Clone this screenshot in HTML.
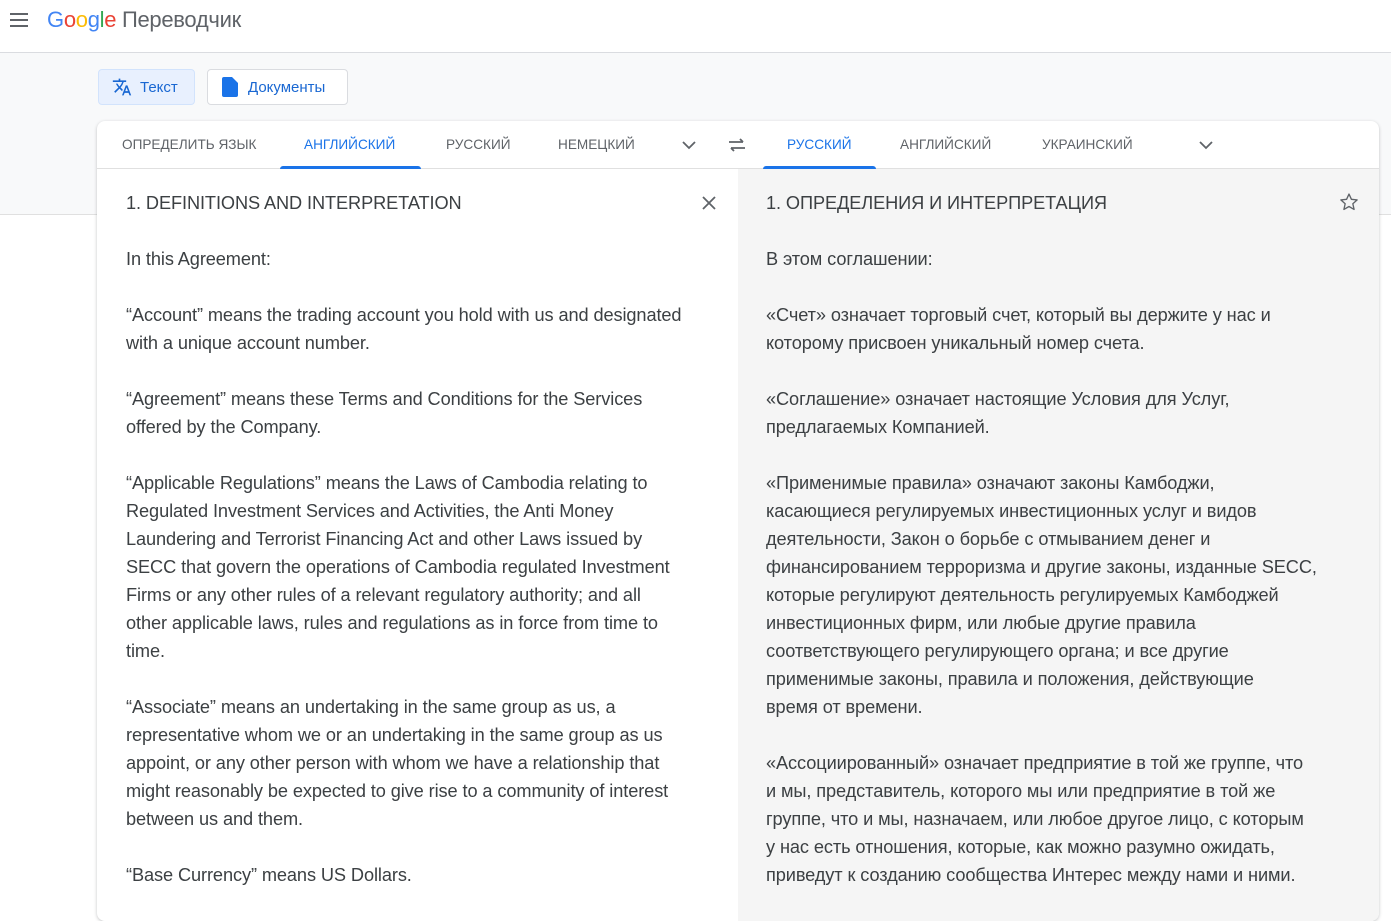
<!DOCTYPE html>
<html><head><meta charset="utf-8"><style>
*{margin:0;padding:0;box-sizing:border-box}
body{width:1391px;height:909px;overflow:hidden;background:#fff;font-family:"Liberation Sans",sans-serif;color:#3c4043;position:relative}
.hdr{height:53px;border-bottom:1px solid #dadce0;position:relative;background:#fff}
.band{position:absolute;top:53px;left:0;width:1391px;height:162px;background:#f8f9fa;border-bottom:1px solid #e0e0e0}
.btn{position:absolute;top:69px;height:36px;border-radius:4px;font-size:15px;color:#1967d2;display:flex;align-items:center}
.card{position:absolute;left:97px;top:121px;width:1282px;height:800px;background:#fff;border-radius:8px;box-shadow:0 1px 3px rgba(60,64,67,.3);overflow:hidden}
.tabs{height:48px;border-bottom:1px solid #e0e0e0;position:relative;font-size:13.6px;color:#5f6368}
.tab{position:absolute;top:16px}
.act{color:#1a73e8}
.ul{position:absolute;top:45px;height:3px;background:#1a73e8;border-radius:3px 3px 0 0}
.right{position:absolute;left:641px;top:48px;width:641px;height:760px;background:#f5f5f5}
.txt{position:absolute;top:68px;font-size:18.2px;line-height:28px;letter-spacing:-.1px;white-space:pre;color:#3c4043}
</style></head><body>
<div class="hdr">
<svg style="position:absolute;left:9px;top:12px" width="20" height="16" viewBox="0 0 20 16"><path d="M1 2h18M1 8h18M1 14h18" stroke="#5f6368" stroke-width="2"/></svg>
<div style="position:absolute;left:47px;top:7px;font-size:22px;letter-spacing:-.3px"><span style="color:#4285f4">G</span><span style="color:#ea4335">o</span><span style="color:#fbbc05">o</span><span style="color:#4285f4">g</span><span style="color:#34a853">l</span><span style="color:#ea4335">e</span> <span style="color:#5f6368">Переводчик</span></div>
</div>
<div class="band"></div>
<div class="btn" style="left:98px;width:97px;background:#e8f0fe;border:1px solid #d2e3fc"><svg style="margin:0 8px 0 13px" width="20" height="20" viewBox="0 0 24 24"><path fill="#1967d2" d="M12.87 15.07l-2.54-2.51.03-.03A17.5 17.5 0 0014.07 6H17V4h-7V2H8v2H1v2h11.17C11.5 7.920 10.44 9.75 9 11.35 8.07 10.32 7.3 9.19 6.690 8h-2c.73 1.63 1.73 3.17 2.98 4.56l-5.09 5.02L4 19l5-5 3.11 3.11.76-2.04zM18.5 10h-2L12 22h2l1.12-3h4.75L21 22h2l-4.5-12zm-2.62 7l1.62-4.33L19.12 17h-3.24z"/></svg>Текст</div>
<div class="btn" style="left:207px;width:141px;background:#fff;border:1px solid #dadce0"><svg style="margin:0 10px 0 14px" width="16" height="20" viewBox="0 0 16 20"><path fill="#1a73e8" d="M2 0h8l6 6v12a2 2 0 01-2 2H2a2 2 0 01-2-2V2a2 2 0 012-2z"/></svg>Документы</div>
<div class="card">
<div class="tabs">
<span class="tab" style="left:25px">ОПРЕДЕЛИТЬ ЯЗЫК</span>
<span class="tab act" style="left:207px">АНГЛИЙСКИЙ</span>
<div class="ul" style="left:183px;width:141px"></div>
<span class="tab" style="left:349px">РУССКИЙ</span>
<span class="tab" style="left:461px">НЕМЕЦКИЙ</span>
<svg style="position:absolute;left:585px;top:19px" width="14" height="10" viewBox="0 0 14 10"><path d="M1 2l6 6 6-6" fill="none" stroke="#5f6368" stroke-width="1.8"/></svg>
<svg style="position:absolute;left:631px;top:16px" width="18" height="16" viewBox="0 0 18 16"><path d="M1 5h14M12 2l3 3M17 11H3M6 14l-3-3" fill="none" stroke="#5f6368" stroke-width="1.8"/></svg>
<span class="tab act" style="left:690px">РУССКИЙ</span>
<div class="ul" style="left:666px;width:113px"></div>
<span class="tab" style="left:803px">АНГЛИЙСКИЙ</span>
<span class="tab" style="left:945px">УКРАИНСКИЙ</span>
<svg style="position:absolute;left:1102px;top:19px" width="14" height="10" viewBox="0 0 14 10"><path d="M1 2l6 6 6-6" fill="none" stroke="#5f6368" stroke-width="1.8"/></svg>
</div>
<div class="right"></div>
<svg style="position:absolute;left:605px;top:75px" width="14" height="14" viewBox="0 0 14 14"><path d="M1 1l12 12M13 1L1 13" stroke="#5f6368" stroke-width="1.8"/></svg>
<svg style="position:absolute;left:1242px;top:71px" width="20" height="20" viewBox="0 0 24 24"><path d="M12 2.5l2.9 6.3 6.9.7-5.2 4.6 1.5 6.8L12 17.4l-6.1 3.5 1.5-6.8L2.2 9.5l6.9-.7z" fill="none" stroke="#5f6368" stroke-width="1.6" stroke-linejoin="round"/></svg>
<div class="txt" style="left:29px">1. DEFINITIONS AND INTERPRETATION

In this Agreement:

“Account” means the trading account you hold with us and designated
with a unique account number.

“Agreement” means these Terms and Conditions for the Services
offered by the Company.

“Applicable Regulations” means the Laws of Cambodia relating to
Regulated Investment Services and Activities, the Anti Money
Laundering and Terrorist Financing Act and other Laws issued by
SECC that govern the operations of Cambodia regulated Investment
Firms or any other rules of a relevant regulatory authority; and all
other applicable laws, rules and regulations as in force from time to
time.

“Associate” means an undertaking in the same group as us, a
representative whom we or an undertaking in the same group as us
appoint, or any other person with whom we have a relationship that
might reasonably be expected to give rise to a community of interest
between us and them.

“Base Currency” means US Dollars.</div>
<div class="txt" style="left:669px">1. ОПРЕДЕЛЕНИЯ И ИНТЕРПРЕТАЦИЯ

В этом соглашении:

«Счет» означает торговый счет, который вы держите у нас и
которому присвоен уникальный номер счета.

«Соглашение» означает настоящие Условия для Услуг,
предлагаемых Компанией.

«Применимые правила» означают законы Камбоджи,
касающиеся регулируемых инвестиционных услуг и видов
деятельности, Закон о борьбе с отмыванием денег и
финансированием терроризма и другие законы, изданные SECC,
которые регулируют деятельность регулируемых Камбоджей
инвестиционных фирм, или любые другие правила
соответствующего регулирующего органа; и все другие
применимые законы, правила и положения, действующие
время от времени.

«Ассоциированный» означает предприятие в той же группе, что
и мы, представитель, которого мы или предприятие в той же
группе, что и мы, назначаем, или любое другое лицо, с которым
у нас есть отношения, которые, как можно разумно ожидать,
приведут к созданию сообщества Интерес между нами и ними.</div>
</div>
</body></html>
